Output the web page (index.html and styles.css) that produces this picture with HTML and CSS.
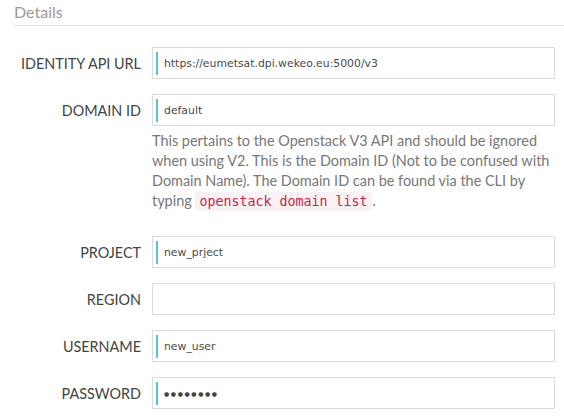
FILE: index.html
```html
<!DOCTYPE html>
<html>
<head>
<meta charset="utf-8">
<link rel="stylesheet" href="styles.css">
</head>
<body>
<div class="panel">
  <h3 class="legend">Details</h3>
  <div class="form">
    <div class="row">
      <label class="label">IDENTITY API URL</label>
      <div class="field"><span class="bar"></span><span class="value">https://eumetsat.dpi.wekeo.eu:5000/v3</span></div>
    </div>
    <div class="row">
      <label class="label">DOMAIN ID</label>
      <div class="field"><span class="bar"></span><span class="value">default</span></div>
    </div>
    <p class="help">This pertains to the Openstack V3 API and should be ignored when using V2. This is the Domain ID (Not to be confused with Domain Name). The Domain ID can be found via the CLI by typing <code class="code">openstack domain list</code>.</p>
    <div class="row">
      <label class="label">PROJECT</label>
      <div class="field"><span class="bar"></span><span class="value">new_prject</span></div>
    </div>
    <div class="row">
      <label class="label">REGION</label>
      <div class="field"></div>
    </div>
    <div class="row">
      <label class="label">USERNAME</label>
      <div class="field"><span class="bar"></span><span class="value">new_user</span></div>
    </div>
    <div class="row">
      <label class="label">PASSWORD</label>
      <div class="field"><span class="bar"></span><span class="value dots">●●●●●●●●</span></div>
    </div>
  </div>
</div>
</body>
</html>
```
FILE: styles.css
```css
html, body {
  margin: 0;
  padding: 0;
  background: #ffffff;
}
.panel {
  padding-left: 14px;
  overflow: hidden;
}
.legend {
  margin: 0;
  font-family: Lato, sans-serif;
  font-weight: 400;
  font-size: 16px;
  line-height: 20px;
  padding-top: 2px;
  padding-bottom: 3px;
  color: #9a9a9a;
  border-bottom: 1px solid #e5e5e5;
  margin-right: -20px;
}
.form {
  padding-top: 21px;
  display: flex;
  flex-direction: column;
}
.row {
  display: grid;
  grid-template-columns: 127px 403px;
  column-gap: 11px;
  align-items: center;
  margin-bottom: 15px;
}
.label {
  text-align: right;
  font-family: Lato, sans-serif;
  font-size: 14.4px;
  color: #444444;
}
.field {
  box-sizing: border-box;
  height: 32px;
  border: 1px solid #dcdcdc;
  display: flex;
  align-items: center;
  padding-left: 3px;
}
.bar {
  width: 2px;
  height: 23px;
  background: #5bc0de;
  margin-right: 6px;
}
.value {
  font-family: "DejaVu Sans", sans-serif;
  font-size: 10.85px;
  color: #4a4a4a;
}
.dots {
  font-size: 6px;
  letter-spacing: 1.6px;
  color: #444;
}
.help {
  margin: -10px 0 24px 138px;
  width: 404px;
  font-family: Lato, sans-serif;
  font-size: 14.45px;
  line-height: 20px;
  color: #777777;
}
.code {
  font-family: "DejaVu Sans Mono", monospace;
  font-size: 13.3px;
  color: #c7254e;
  background: #f9f2f4;
  border-radius: 4px;
  padding: 2px 4px;
  margin-right: 1px;
}
```
